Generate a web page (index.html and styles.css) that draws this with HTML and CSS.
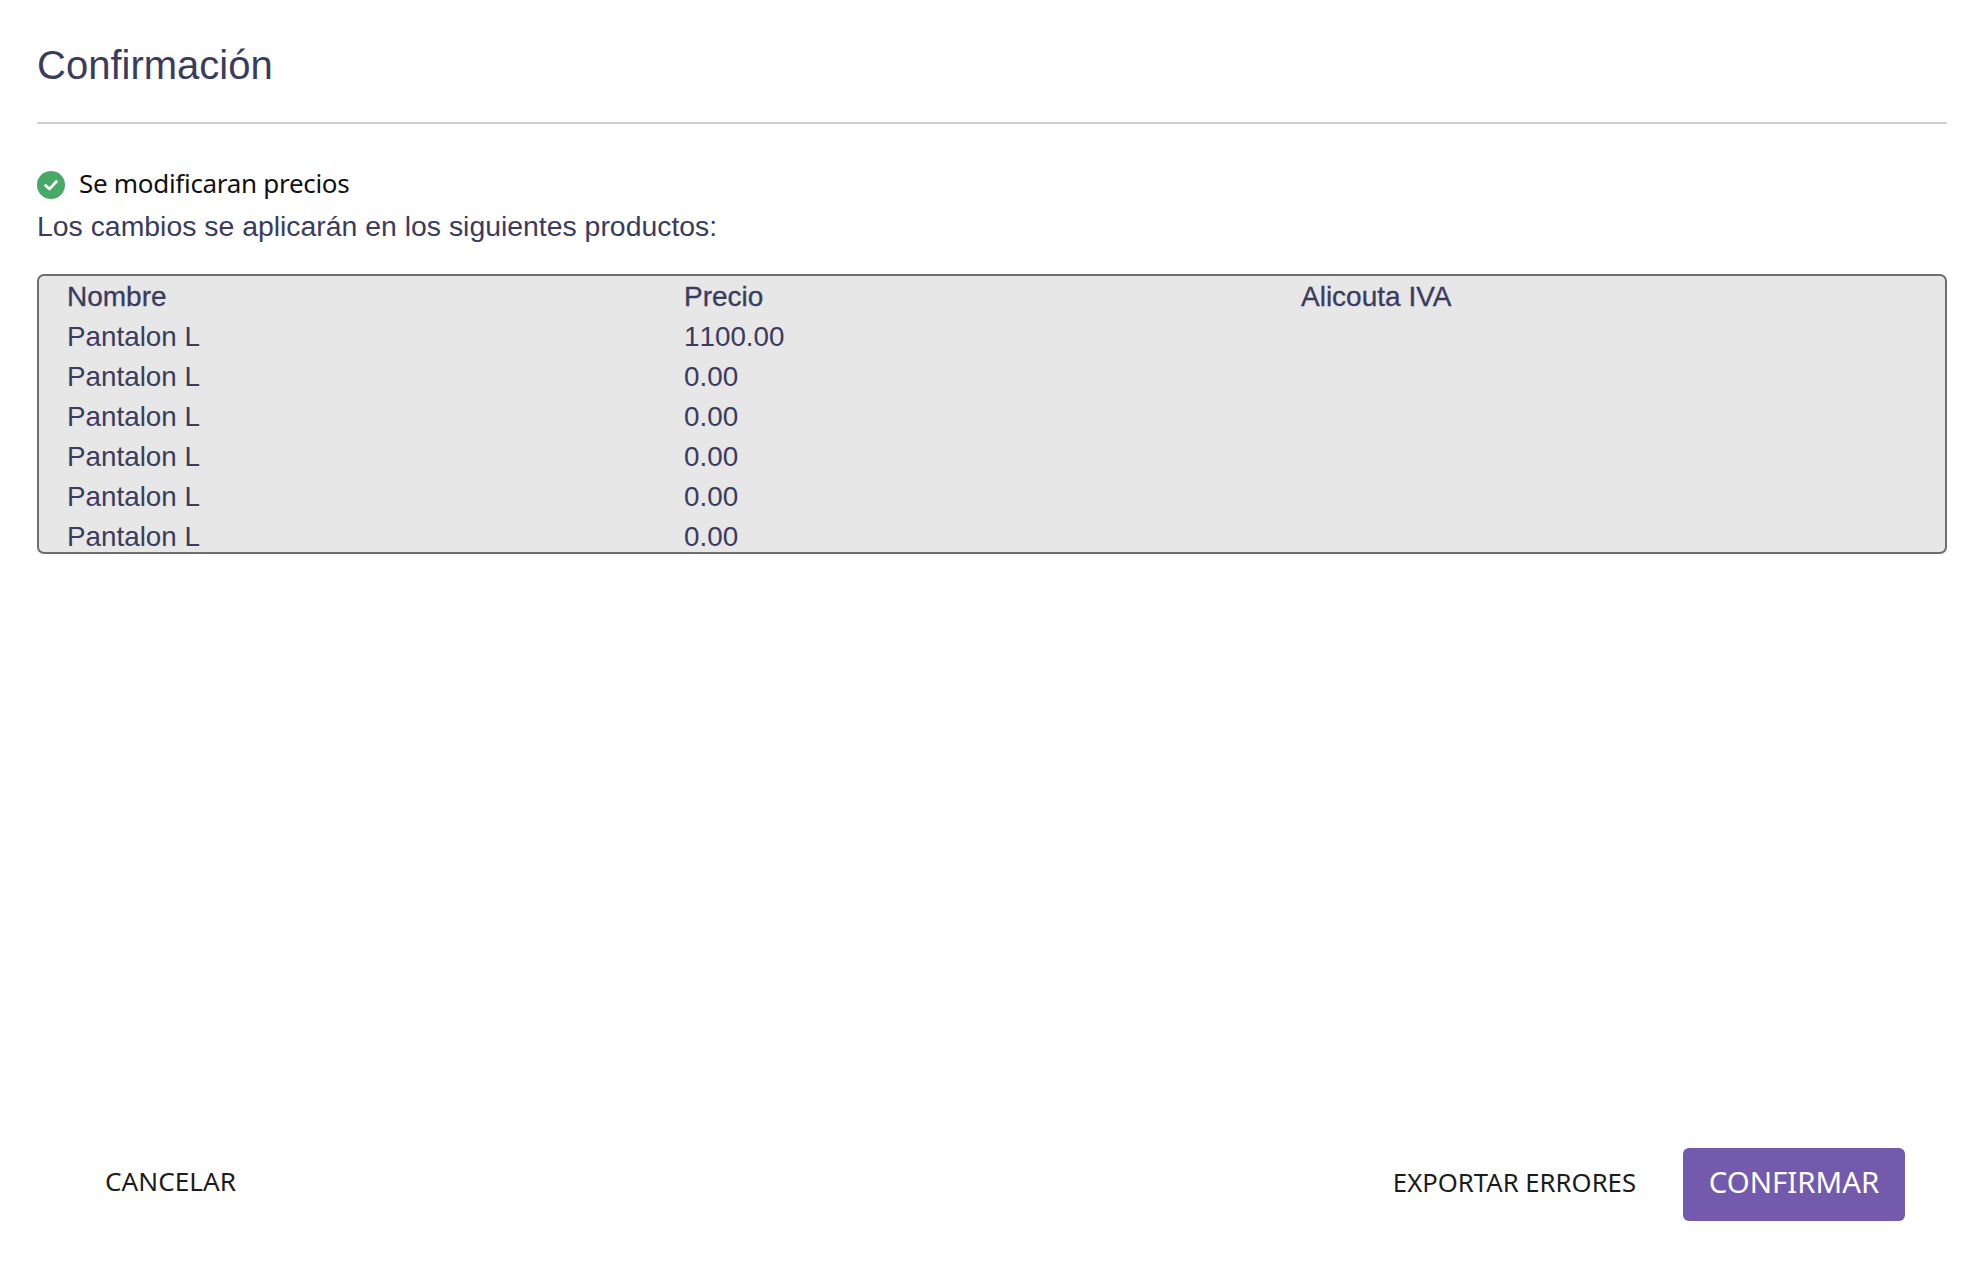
FILE: index.html
```html
<!DOCTYPE html>
<html lang="es">
<head>
<meta charset="utf-8">
<title>Confirmación</title>
<link rel="stylesheet" href="styles.css">
</head>
<body>
<main class="page">
  <header class="head"><h1 class="title">Confirmación</h1></header>
  <div class="status">
    <svg class="check" viewBox="0 0 28 28" width="28" height="28" aria-hidden="true"><circle cx="14" cy="14" r="14" fill="#48a865"/><path d="M8.6 14.4l3.8 3.7 7-7.6" fill="none" stroke="#fff" stroke-width="2.8" stroke-linecap="round" stroke-linejoin="round"/></svg>
    <span class="status-text">Se modificaran precios</span>
  </div>
  <p class="lead">Los cambios se aplicarán en los siguientes productos:</p>
  <div class="table">
    <div class="row head-row"><span>Nombre</span><span>Precio</span><span>Alicouta IVA</span></div>
    <div class="row"><span>Pantalon L</span><span>1100.00</span><span></span></div>
    <div class="row"><span>Pantalon L</span><span>0.00</span><span></span></div>
    <div class="row"><span>Pantalon L</span><span>0.00</span><span></span></div>
    <div class="row"><span>Pantalon L</span><span>0.00</span><span></span></div>
    <div class="row"><span>Pantalon L</span><span>0.00</span><span></span></div>
    <div class="row"><span>Pantalon L</span><span>0.00</span><span></span></div>
  </div>
  <footer class="foot">
    <button class="btn cancel">CANCELAR</button>
    <div class="actions">
      <button class="btn export">EXPORTAR ERRORES</button>
      <button class="btn primary">CONFIRMAR</button>
    </div>
  </footer>
</main>
</body>
</html>
```
FILE: styles.css
```css
* { box-sizing: border-box; }
html, body { margin: 0; height: 100%; background: #fff; }
.page {
  height: 1262px;
  padding: 0 37px 41px 37px;
  display: flex;
  flex-direction: column;
  font-family: "Liberation Sans", Arial, sans-serif;
  color: #3a3c5e;
}
.head { height: 124px; border-bottom: 2px solid #d0d0d3; display: flex; align-items: flex-start; }
.title { margin: 0; padding-top: 42px; font-size: 40px; line-height: 46px; font-weight: 400; }
.status { display: flex; align-items: center; gap: 14px; margin-top: 43px; height: 36px; }
.check { flex: none; }
.status-text { font-family: "Noto Sans", sans-serif; font-size: 26px; line-height: 36px; color: #111; letter-spacing: -0.3px; margin-top: -4px; }
.lead { margin: 5px 0 0; font-size: 28.4px; line-height: 36px; height: 36px; }
.table {
  margin-top: 30px;
  height: 280px;
  border: 2px solid #6f6f6f;
  border-radius: 7px;
  background: #e7e7e7;
  padding: 1px 27px 0 28px;
  overflow: hidden;
}
.row { display: grid; grid-template-columns: repeat(3, 617px); height: 40px; font-size: 27.8px; line-height: 40px; font-kerning: none; }
.head-row { -webkit-text-stroke: 0.3px #3a3c5e; font-kerning: normal; font-size: 28px; }
.foot { margin-top: auto; display: flex; justify-content: space-between; align-items: center; padding-right: 42px; }
.btn { border: 0; background: none; padding: 0; color: #1c1c1c; font-family: "Noto Sans", sans-serif; }
.cancel { font-size: 26.2px; margin-left: 68px; margin-top: -7px; }
.actions { display: flex; align-items: center; gap: 47px; }
.export { font-size: 25.7px; margin-top: -4px; }
.primary { width: 222px; height: 73px; padding-bottom: 5px; border-radius: 6px; background: #745aad; color: #fff; font-size: 29.4px; }
```
